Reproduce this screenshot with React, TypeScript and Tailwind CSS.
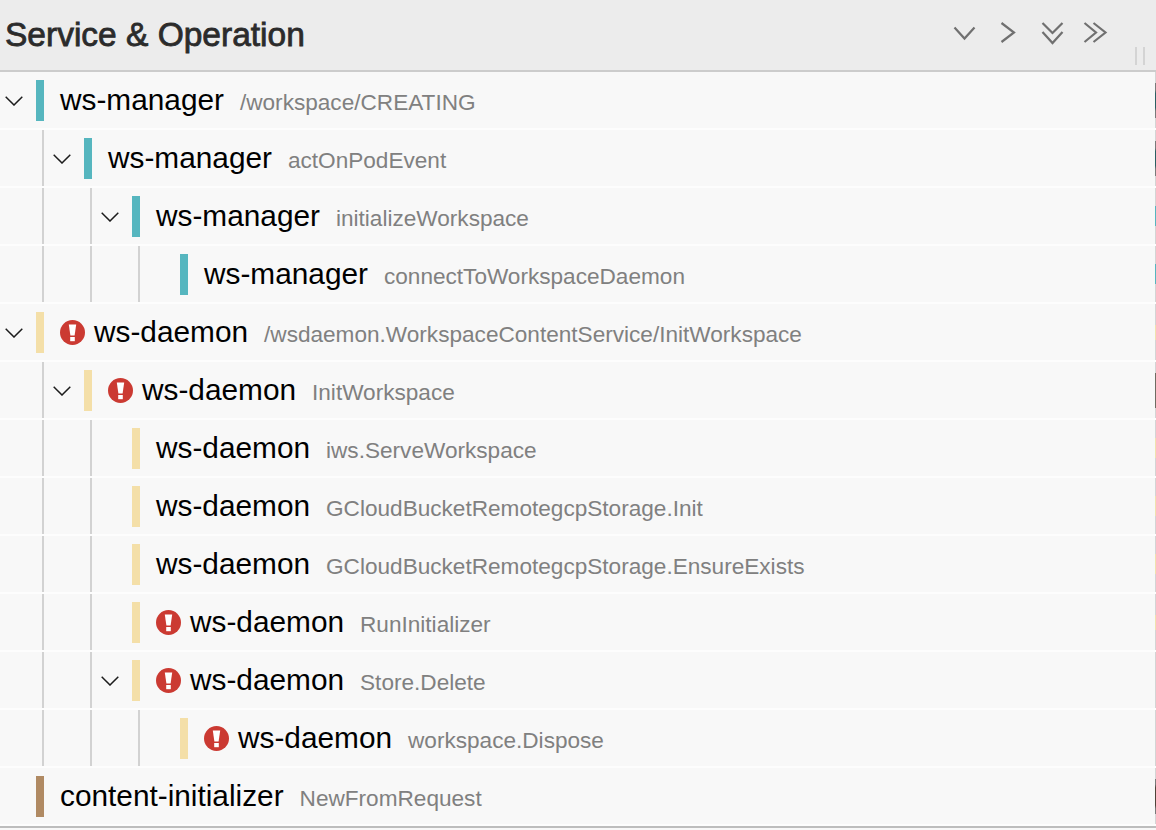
import * as React from 'react';

type Span = {
  service: string;
  op: string;
  depth: number;
  color: string;
  tick: string;
  open?: boolean;
  error?: boolean;
};

const TEAL = 'bg-[#56b6bf]';
const SAND = 'bg-[#f4dfa8]';
const BROWN = 'bg-[#b08a63]';

// right edge marks: how long the span ran, relative to the trace
const TICK_TEAL = 'h-5 bg-[#56b6bf]';
const TICK_SAND = 'h-5 bg-[#f0e2ae]';
const TICK_SAND_SHORT = 'h-[15px] bg-[#f0e2ae]';

const spans: Span[] = [
  { service: 'ws-manager', op: '/workspace/CREATING', depth: 0, color: TEAL, open: true, tick: 'h-[35px] bg-[linear-gradient(#7a7a7a_20%,#2b5f62_30%,#2b5f62_70%,#7a7a7a_80%)]' },
  { service: 'ws-manager', op: 'actOnPodEvent', depth: 1, color: TEAL, open: true, tick: 'h-[35px] bg-[linear-gradient(#7a7a7a_20%,#2b5f62_30%,#2b5f62_70%,#7a7a7a_80%)]' },
  { service: 'ws-manager', op: 'initializeWorkspace', depth: 2, color: TEAL, open: true, tick: TICK_TEAL },
  { service: 'ws-manager', op: 'connectToWorkspaceDaemon', depth: 3, color: TEAL, tick: TICK_TEAL },
  { service: 'ws-daemon', op: '/wsdaemon.WorkspaceContentService/InitWorkspace', depth: 0, color: SAND, open: true, error: true, tick: TICK_SAND_SHORT },
  { service: 'ws-daemon', op: 'InitWorkspace', depth: 1, color: SAND, open: true, error: true, tick: 'h-[35px] bg-[#6f6c62]' },
  { service: 'ws-daemon', op: 'iws.ServeWorkspace', depth: 2, color: SAND, tick: TICK_SAND },
  { service: 'ws-daemon', op: 'GCloudBucketRemotegcpStorage.Init', depth: 2, color: SAND, tick: TICK_SAND },
  { service: 'ws-daemon', op: 'GCloudBucketRemotegcpStorage.EnsureExists', depth: 2, color: SAND, tick: TICK_SAND },
  { service: 'ws-daemon', op: 'RunInitializer', depth: 2, color: SAND, error: true, tick: TICK_SAND_SHORT },
  { service: 'ws-daemon', op: 'Store.Delete', depth: 2, color: SAND, open: true, error: true, tick: '' },
  { service: 'ws-daemon', op: 'workspace.Dispose', depth: 3, color: SAND, error: true, tick: '' },
  { service: 'content-initializer', op: 'NewFromRequest', depth: 0, color: BROWN, tick: 'h-[35px] bg-[linear-gradient(#7a7a7a_15%,#4f4339_25%,#4f4339_75%,#7a7a7a_85%)]' },
];

function ErrorIcon() {
  return (
    <svg viewBox="0 0 25 25" className="mr-[9px] h-[25px] w-[25px] shrink-0">
      <circle cx="12.5" cy="12.5" r="12.5" fill="#cb3a32" />
      <path d="M8.8 4.5h7.4l-1.6 11h-4.2z" fill="#fff" />
      <rect x="10.2" y="17" width="4.6" height="4.2" fill="#fff" />
    </svg>
  );
}

function Row({ span }: { span: Span }) {
  return (
    <div className="flex h-[58px] items-stretch border-b-2 border-[#fdfdfd]">
      {Array.from({ length: span.depth }).map((_, i) => (
        <span key={i} className="w-12 shrink-0 pl-[42px]">
          <span className="block h-full w-0.5 bg-[#d2d2d2]" />
        </span>
      ))}
      <span className="flex w-9 shrink-0 items-center pl-[5px] pt-[2px]">
        {span.open && (
          <svg viewBox="0 0 18 10" className="h-2.5 w-[18px]" fill="none" stroke="#1c1c1c" strokeWidth="1.5">
            <path d="M.7.7L9 9l8.3-8.3" />
          </svg>
        )}
      </span>
      <div className="flex min-w-0 flex-1 items-center">
        <span className={`mr-4 h-[41px] w-2 shrink-0 ${span.color}`} />
        {span.error && <ErrorIcon />}
        <span className="text-[29.8px] leading-none text-black">{span.service}</span>
        <span className="ml-4 pt-1.5 text-[22.6px] leading-none text-[#808080]">{span.op}</span>
      </div>
      <span className="flex w-px shrink-0 items-center bg-[#d4d4d4]">
        <span className={`block w-px ${span.tick}`} />
      </span>
    </div>
  );
}

export default function App() {
  return (
    <div className="h-[830px] w-[1156px] overflow-hidden bg-[#f8f8f8] font-['Liberation_Sans',Arial,sans-serif]">
      <div className="flex h-[72px] items-center justify-between border-b-2 border-[#cccccc] bg-[#ececec] pl-[5px]">
        <span className="text-[33.5px] text-[#2b2b2b] [-webkit-text-stroke:0.8px_#2b2b2b]">Service &amp; Operation</span>
        <div className="relative flex h-full items-center">
          <svg viewBox="952 20 156 26" className="mb-1 mr-12 h-[26px] w-[156px]" fill="none" stroke="#707070" strokeWidth="2.2">
            <path d="M954.5 27.5L964.5 38.5 974.5 27.5" />
            <path d="M1001.5 23L1014 32.5 1001.5 42" />
            <path d="M1042.5 23L1052.5 33 1062.5 23M1042.5 32L1052.5 43 1062.5 32" />
            <path d="M1084.5 23L1096 32.5 1084.5 42M1093.5 23L1105.5 32.5 1093.5 42" />
          </svg>
          <span className="absolute bottom-[5px] right-[11px] h-[18px] w-[10px] border-x-2 border-[#d4d4d4]" />
        </div>
      </div>
      {spans.map((s, i) => (
        <Row key={i} span={s} />
      ))}
      <div className="h-0.5 bg-[#bdbdbd]" />
    </div>
  );
}
